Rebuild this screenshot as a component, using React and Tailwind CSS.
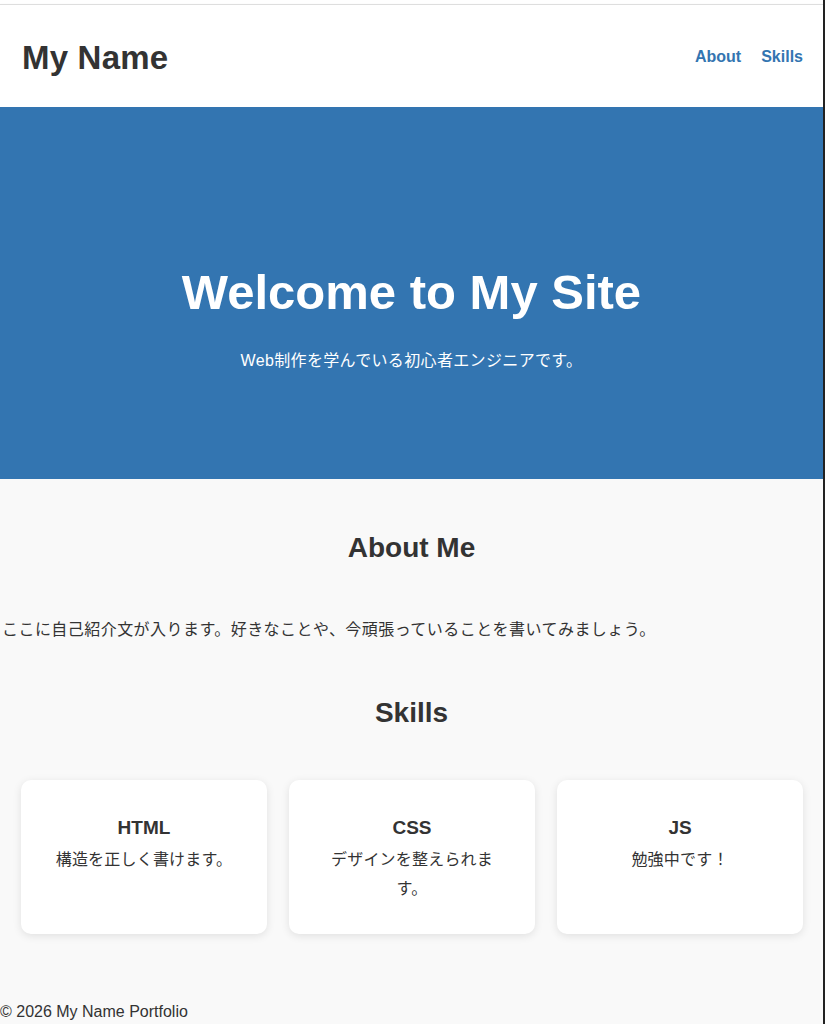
const skills = [
  { name: "HTML", text: "構造を正しく書けます。" },
  { name: "CSS", text: "デザインを整えられます。" },
  { name: "JS", text: "勉強中です！" },
];

export default function App() {
  return (
    <div className="flex min-h-[1024px] w-[825px] bg-[#f9f9f9] font-['Liberation_Sans','Noto_Sans_CJK_JP',sans-serif] text-[#333] leading-[1.8]">
      <div className="flex w-[823px] flex-col">
        <div className="h-[4px] bg-white" />
        <header className="flex h-[103px] items-center justify-between border-t border-[#dedede] bg-white pl-[22px] pr-[20px] pt-[2px] shadow-[0_1px_2px_rgba(0,0,0,0.15)]">
          <h1 className="text-[33px] font-bold leading-none tracking-[0.2px]">My Name</h1>
          <nav className="flex gap-[20px] text-[16px] font-bold text-[#3375b1]">
            <a href="#about">About</a>
            <a href="#skills">Skills</a>
          </nav>
        </header>

        <section className="flex h-[372px] flex-col items-center bg-[#3375b1] pt-[155px] text-white">
          <h2 className="text-[49px] font-bold leading-[60px]">Welcome to My Site</h2>
          <p className="mt-[25px] text-[16px] tracking-[0.35px]">Web制作を学んでいる初心者エンジニアです。</p>
        </section>

        <main className="flex flex-col">
          <section id="about" className="flex flex-col">
            <h2 className="mt-[52px] text-center text-[28px] font-bold leading-[34px]">About Me</h2>
            <p className="mt-[51px] pl-[2px] text-[16px] tracking-[0.45px]">
              ここに自己紹介文が入ります。好きなことや、今頑張っていることを書いてみましょう。
            </p>
          </section>

          <section id="skills" className="flex flex-col">
            <h2 className="mt-[51px] text-center text-[28px] font-bold leading-[34px]">Skills</h2>
            <div className="mt-[50px] grid grid-cols-3 gap-[22px] pl-[21px] pr-[20px]">
              {skills.map((skill) => (
                <div
                  key={skill.name}
                  className="rounded-[10px] bg-white px-[30px] pt-[31px] pb-[31px] text-center shadow-[0_2px_8px_rgba(0,0,0,0.1)]"
                >
                  <h3 className="text-[19px] font-bold leading-[34px]">{skill.name}</h3>
                  <p className="text-[16px] leading-[29px] tracking-[0.2px]">{skill.text}</p>
                </div>
              ))}
            </div>
          </section>
        </main>

        <footer className="mt-[63px] text-[16px] leading-[29px]">© 2026 My Name Portfolio</footer>
      </div>
      <div className="w-[2px] bg-[#222]" />
    </div>
  );
}
